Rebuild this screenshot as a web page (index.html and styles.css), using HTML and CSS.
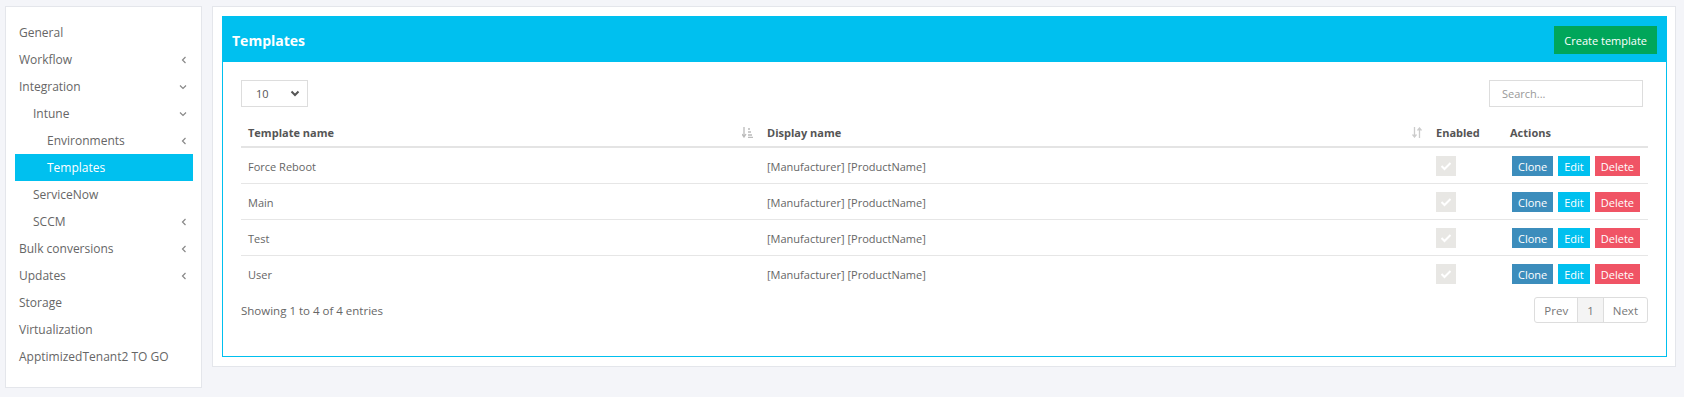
FILE: index.html
```html
<!DOCTYPE html>
<html>

<head>
    <title>Templates</title>
    <link rel="stylesheet" href="styles.css">
</head>

<body>
    <div class="layout">
        <div class="sidebar">
            <ul class="menu">
                <li class="item">General</li>
                <li class="item">Workflow <svg class="chev" width="6" height="8" viewBox="0 0 6 8"><path d="M4.5 1 L1.5 4 L4.5 7" fill="none" stroke="#888" stroke-width="1.2"/></svg></li>
                <li class="item">Integration <svg class="chev" width="8" height="6" viewBox="0 0 8 6"><path d="M1 1.5 L4 4.5 L7 1.5" fill="none" stroke="#888" stroke-width="1.2"/></svg></li>
                <li class="item lvl1">Intune <svg class="chev" width="8" height="6" viewBox="0 0 8 6"><path d="M1 1.5 L4 4.5 L7 1.5" fill="none" stroke="#888" stroke-width="1.2"/></svg></li>
                <li class="item lvl2">Environments <svg class="chev" width="6" height="8" viewBox="0 0 6 8"><path d="M4.5 1 L1.5 4 L4.5 7" fill="none" stroke="#888" stroke-width="1.2"/></svg></li>
                <li class="item lvl2 active">Templates</li>
                <li class="item lvl1">ServiceNow</li>
                <li class="item lvl1">SCCM <svg class="chev" width="6" height="8" viewBox="0 0 6 8"><path d="M4.5 1 L1.5 4 L4.5 7" fill="none" stroke="#888" stroke-width="1.2"/></svg></li>
                <li class="item">Bulk conversions <svg class="chev" width="6" height="8" viewBox="0 0 6 8"><path d="M4.5 1 L1.5 4 L4.5 7" fill="none" stroke="#888" stroke-width="1.2"/></svg></li>
                <li class="item">Updates <svg class="chev" width="6" height="8" viewBox="0 0 6 8"><path d="M4.5 1 L1.5 4 L4.5 7" fill="none" stroke="#888" stroke-width="1.2"/></svg></li>
                <li class="item">Storage</li>
                <li class="item">Virtualization</li>
                <li class="item">ApptimizedTenant2 TO GO</li>
            </ul>
        </div>

        <div class="main">
            <div class="panel">
                <div class="panel-header">
                    <h3>Templates</h3>
                    <button class="btn-create">Create template</button>
                </div>
                <div class="panel-body">
                    <div class="toolbar">
                        <div class="select">
                            <span>10</span>
                            <svg width="10" height="7" viewBox="0 0 10 7"><path d="M1.5 1.5 L5 5 L8.5 1.5" fill="none" stroke="#555" stroke-width="2"/></svg>
                        </div>
                        <input type="text" class="search" placeholder="Search...">
                    </div>

                    <table class="grid">
                        <colgroup>
                            <col style="width: 519px">
                            <col style="width: 669px">
                            <col style="width: 74px">
                            <col>
                        </colgroup>
                        <thead>
                            <tr>
                                <th class="sortable">Template name
                                    <svg class="sort" width="11" height="11" viewBox="0 0 11 11"><path d="M2 0 V9 M0 7 L2 10 L4 7" fill="none" stroke="#bbb" stroke-width="1.3"/><path d="M6 2 h2 M6 5 h3 M6 8 h4 M6 10.3 h5" stroke="#bbb" stroke-width="1.3"/></svg>
                                </th>
                                <th class="sortable">Display name
                                    <svg class="sort" width="10" height="11" viewBox="0 0 10 11"><path d="M2.5 0 V10 M0.5 7.5 L2.5 10 L4.5 7.5" fill="none" stroke="#ccc" stroke-width="1.3"/><path d="M7.5 11 V1 M5.5 3.5 L7.5 1 L9.5 3.5" fill="none" stroke="#ccc" stroke-width="1.3"/></svg>
                                </th>
                                <th>Enabled</th>
                                <th>Actions</th>
                            </tr>
                        </thead>
                        <tbody>
                            <tr>
                                <td>Force Reboot</td>
                                <td>[Manufacturer] [ProductName]</td>
                                <td><span class="check"><svg width="12" height="10" viewBox="0 0 12 10"><path d="M1.5 5 L4.5 8 L10.5 2" fill="none" stroke="#fff" stroke-width="2"/></svg></span></td>
                                <td class="actions"><button class="btn clone">Clone</button><button class="btn edit">Edit</button><button class="btn delete">Delete</button></td>
                            </tr>
                            <tr>
                                <td>Main</td>
                                <td>[Manufacturer] [ProductName]</td>
                                <td><span class="check"><svg width="12" height="10" viewBox="0 0 12 10"><path d="M1.5 5 L4.5 8 L10.5 2" fill="none" stroke="#fff" stroke-width="2"/></svg></span></td>
                                <td class="actions"><button class="btn clone">Clone</button><button class="btn edit">Edit</button><button class="btn delete">Delete</button></td>
                            </tr>
                            <tr>
                                <td>Test</td>
                                <td>[Manufacturer] [ProductName]</td>
                                <td><span class="check"><svg width="12" height="10" viewBox="0 0 12 10"><path d="M1.5 5 L4.5 8 L10.5 2" fill="none" stroke="#fff" stroke-width="2"/></svg></span></td>
                                <td class="actions"><button class="btn clone">Clone</button><button class="btn edit">Edit</button><button class="btn delete">Delete</button></td>
                            </tr>
                            <tr>
                                <td>User</td>
                                <td>[Manufacturer] [ProductName]</td>
                                <td><span class="check"><svg width="12" height="10" viewBox="0 0 12 10"><path d="M1.5 5 L4.5 8 L10.5 2" fill="none" stroke="#fff" stroke-width="2"/></svg></span></td>
                                <td class="actions"><button class="btn clone">Clone</button><button class="btn edit">Edit</button><button class="btn delete">Delete</button></td>
                            </tr>
                        </tbody>
                    </table>

                    <div class="footer">
                        <span class="info">Showing 1 to 4 of 4 entries</span>
                        <div class="pager">
                            <span class="page">Prev</span>
                            <span class="page current">1</span>
                            <span class="page">Next</span>
                        </div>
                    </div>
                </div>
            </div>
        </div>
    </div>
</body>

</html>
```

FILE: styles.css
```css
body {
    margin: 0;
    background-color: #f4f5f9;
    font-family: "Open Sans", sans-serif;
    color: #666;
}

.layout {
    display: flex;
    align-items: flex-start;
    gap: 10px;
    padding: 6px 8px 0 5px;
}

.sidebar {
    width: 197px;
    flex-shrink: 0;
    background-color: #fff;
    border: 1px solid #e4e6eb;
    padding: 12px 8px 17px 9px;
    box-sizing: border-box;
}

.menu {
    list-style: none;
    margin: 0;
    padding: 0;
}

.menu .item {
    height: 27px;
    padding: 0 6px 0 4px;
    display: flex;
    align-items: center;
    justify-content: space-between;
    font-size: 12px;
    color: #666;
}

.menu .lvl1 {
    padding-left: 18px;
}

.menu .lvl2 {
    padding-left: 32px;
}

.menu .active {
    background-color: #00c0ef;
    color: #fff;
}

.main {
    flex: 1;
    background-color: #fff;
    border: 1px solid #e4e6eb;
    padding: 9px 8px 9px 9px;
}

.panel {
    border: 1px solid #00c0ef;
}

.panel-header {
    background-color: #00c0ef;
    display: flex;
    justify-content: space-between;
    align-items: center;
    padding: 9px 9px 8px 9px;
}

.panel-header h3 {
    margin: 0;
    font-size: 14px;
    font-weight: 700;
    color: #fff;
}

.btn-create {
    height: 28px;
    padding: 0 10px;
    background-color: #00a65a;
    color: #fff;
    border: none;
    font-family: "Open Sans", sans-serif;
    font-size: 11px;
}

.panel-body {
    padding: 18px 18px 33px 18px;
}

.toolbar {
    display: flex;
    justify-content: space-between;
    align-items: center;
}

.select {
    width: 67px;
    height: 27px;
    box-sizing: border-box;
    border: 1px solid #ddd;
    display: flex;
    align-items: center;
    justify-content: space-between;
    padding: 0 7px 0 14px;
    font-size: 11px;
    color: #555;
}

.search {
    width: 154px;
    height: 27px;
    box-sizing: border-box;
    border: 1px solid #ddd;
    padding: 0 12px;
    margin-right: 5px;
    font-family: "Open Sans", sans-serif;
    font-size: 11px;
    outline: none;
}

.search::placeholder {
    color: #999;
}

.grid {
    width: 100%;
    table-layout: fixed;
    border-collapse: collapse;
    margin-top: 6px;
    font-size: 11px;
}

.grid th {
    text-align: left;
    font-weight: 700;
    color: #555;
    padding: 11px 7px 5px 7px;
    line-height: 17px;
    border-bottom: 2px solid #e4e4e4;
}

.grid th.sortable {
    position: relative;
}

.sort {
    position: absolute;
    right: 7px;
    top: 14px;
}

.grid td {
    padding: 8px 7px 7px 7px;
    line-height: 17px;
    border-bottom: 1px solid #e6e6e6;
    color: #666;
}

.grid tbody tr:last-child td {
    border-bottom: none;
}

.check {
    display: inline-flex;
    width: 20px;
    height: 20px;
    align-items: center;
    justify-content: center;
    background-color: #e8e7e4;
    vertical-align: middle;
}

.grid td.actions {
    white-space: nowrap;
    padding-left: 9px;
}

.btn {
    height: 20px;
    padding: 0 6px;
    border: none;
    color: #fff;
    font-family: "Open Sans", sans-serif;
    font-size: 11px;
    margin-right: 5px;
    vertical-align: middle;
}

.clone {
    background-color: #3c8dbc;
}

.edit {
    background-color: #00c0ef;
}

.delete {
    background-color: #f05465;
}

.footer {
    display: flex;
    justify-content: space-between;
    align-items: center;
    margin-top: 6px;
    font-size: 11.5px;
}

.pager {
    display: flex;
    border: 1px solid #ddd;
    border-radius: 3px;
    height: 26px;
    box-sizing: border-box;
}

.page {
    display: flex;
    align-items: center;
    padding: 0 9px;
    color: #777;
}

.page + .page {
    border-left: 1px solid #ddd;
}

.page.current {
    background-color: #f4f4f4;
}
```
